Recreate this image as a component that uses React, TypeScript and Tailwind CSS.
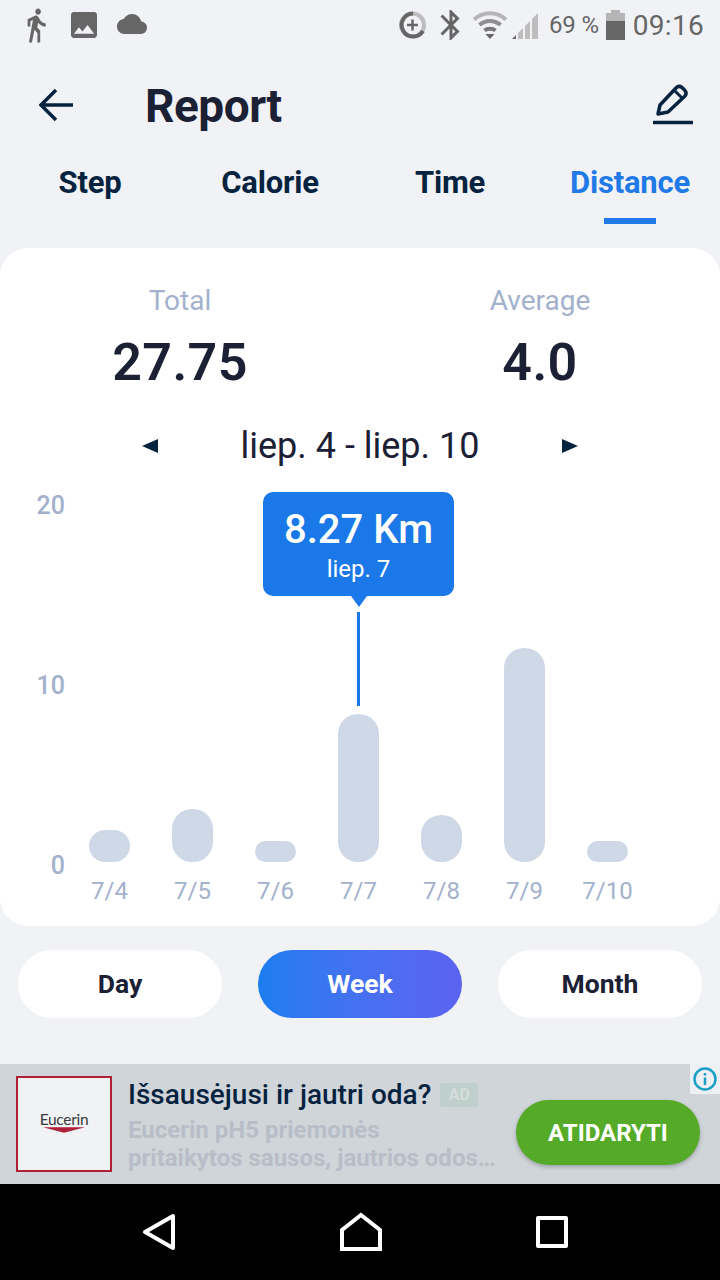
import React from 'react';

const font = { fontFamily: 'Roboto, sans-serif' };

const bars = [
  { label: '7/4', height: 32 },
  { label: '7/5', height: 53 },
  { label: '7/6', height: 21 },
  { label: '7/7', height: 148 },
  { label: '7/8', height: 47 },
  { label: '7/9', height: 214 },
  { label: '7/10', height: 21 },
];

const StatusBar = () => (
  <div className="h-[50px] flex items-center justify-between pl-[22px] pr-[16px] text-[#666666]">
    <div className="flex items-center">
      <svg width="28" height="38" viewBox="2 0 20 24" fill="#666666" preserveAspectRatio="none">
        <path d="M13.5 5.5c1.1 0 2-.9 2-2s-.9-2-2-2-2 .9-2 2 .9 2 2 2zM9.8 8.9L7 23h2.1l1.8-8 2.1 2v6h2v-7.5l-2.1-2 .6-3C14.8 12 16.8 13 19 13v-2c-1.9 0-3.5-1-4.3-2.4l-1-1.6c-.4-.6-1-1-1.7-1-.3 0-.5.1-.8.1L6 8.3V13h2V9.6l1.8-.7" />
      </svg>
      <svg className="ml-[21px]" width="26" height="26" viewBox="3 3 18 18" fill="#666666">
        <path d="M21 19V5c0-1.1-.9-2-2-2H5c-1.1 0-2 .9-2 2v14c0 1.100.9 2 2 2h14c1.100 0 2-.9 2-2zM8.500 13.500l2.500 3.010L14.500 12l4.500 6H5l3.500-4.500z" />
      </svg>
      <svg className="ml-[19px] -mt-[2px]" width="32" height="20" viewBox="0 4 24 16" fill="#666666">
        <path d="M19.350 10.040C18.670 6.590 15.640 4 12 4 9.110 4 6.600 5.640 5.350 8.040 2.340 8.360 0 10.910 0 14c0 3.310 2.690 6 6 6h13c2.760 0 5-2.240 5-5 0-2.640-2.050-4.780-4.650-4.960z" />
      </svg>
    </div>
    <div className="flex items-center">
      <svg width="30" height="30" viewBox="0 0 30 30" fill="none">
        <circle cx="14.500" cy="15" r="11.500" stroke="#bdbdbd" strokeWidth="4" />
        <path d="M15 3.500A11.500 11.500 0 1 0 25 21" stroke="#666666" strokeWidth="4" />
        <path d="M14.500 9.500v11M9 15h11" stroke="#666666" strokeWidth="2.500" />
      </svg>
      <svg className="ml-[11px]" width="24" height="30" viewBox="4 2 16 20" fill="#666666" preserveAspectRatio="none">
        <path d="M17.710 7.710L12 2h-1v7.590L6.410 5 5 6.410 10.590 12 5 17.590 6.410 19 11 14.410V22h1l5.710-5.710-4.300-4.290 4.300-4.290zM13 5.830l1.880 1.880L13 9.590V5.830zm1.880 10.460L13 18.170v-3.760l1.880 1.880z" />
      </svg>
      <svg className="ml-[9px]" width="36" height="30" viewBox="0 0 36 30" fill="none">
        <path d="M2 9.500C11 1 25 1 34 9.500" stroke="#b5b5b5" strokeWidth="4" />
        <path d="M7.500 15C13.500 9.500 22.500 9.500 28.500 15" stroke="#8f8f8f" strokeWidth="4" />
        <path d="M12.500 20.500C15.500 18 20.500 18 23.500 20.500" stroke="#777777" strokeWidth="4" />
        <path d="M13.500 24h9L18 29z" fill="#666666" />
      </svg>
      <svg className="ml-[2px]" width="30" height="30" viewBox="0 0 30 30">
        <path d="M2 29l4-4v4z" fill="#666666" />
        <path d="M8 29v-6l5-5v11zM15 29V16l5-5v18zM22 29V9l6-6v26z" fill="#bdbdbd" />
      </svg>
      <span className="ml-[9px] text-[24px] leading-none tracking-[-0.2px]">69 %</span>
      <svg className="ml-[7px]" width="19" height="30" viewBox="0 0 19 30">
        <path d="M5 0h9v3h5v8H0V3h5z" fill="#b5b5b5" />
        <rect x="0" y="11" width="19" height="19" fill="#666666" />
      </svg>
      <span className="ml-[8px] mt-[2px] text-[28px] leading-none tracking-[0.3px]">09:16</span>
    </div>
  </div>
);

const Header = () => (
  <div className="h-[110px] flex items-center justify-between pl-[39px] pr-[27px]">
    <div className="flex items-center">
      <svg width="34" height="34" viewBox="0 0 34 34" fill="none" stroke="#05233f" strokeWidth="3.500">
        <path d="M34 17H3M17 2L2 17l15 15" />
      </svg>
      <h1 className="ml-[72px] mt-[2px] text-[46px] font-bold leading-none text-[#1b2034] tracking-[-0.5px]">Report</h1>
    </div>
    <svg width="40" height="42" viewBox="0 0 40 42" fill="none" stroke="#05233f" strokeWidth="3.500">
      <path d="M5 30l2-9L23 4c2-2 4-2 6-.5l2.500 2.500c2 2 2 4 .5 6L15 28z" strokeLinejoin="round" />
      <path d="M22 7l8 8" strokeWidth="3" />
      <path d="M1 38.500h38" strokeLinecap="round" />
    </svg>
  </div>
);

const Tabs = () => (
  <div className="grid grid-cols-4 h-[64px]">
    {['Step', 'Calorie', 'Time', 'Distance'].map((t, i) => (
      <div key={t} className="relative flex justify-center pt-[5px]">
        <span className={`text-[31px] font-bold leading-[36px] tracking-[-0.2px] ${i === 3 ? 'text-[#1f7ae8]' : 'text-[#05233f]'}`}>{t}</span>
        {i === 3 && <div className="absolute bottom-0 w-[52px] h-[6px] bg-[#1f7ae8]" />}
      </div>
    ))}
  </div>
);

const Chart = () => (
  <div className="relative mt-[20px] flex">
    <div className="w-[68px] h-[390px] flex flex-col items-end justify-between pr-[3px] text-[25px] font-medium leading-[30px] text-[#a3b1cd]">
      <span>20</span>
      <span>10</span>
      <span>0</span>
    </div>
    <div className="grid grid-cols-7 w-[581px] h-[415px]">
      {bars.map(b => (
        <div key={b.label} className="flex flex-col items-center justify-end">
          <div className="w-[41px] bg-[#cfd8e6] rounded-[20px]" style={{ height: b.height }} />
          <span className="mt-[14px] text-[24px] leading-[30px] text-[#a3b1cd] whitespace-nowrap">{b.label}</span>
        </div>
      ))}
    </div>
    <div className="absolute top-[1px] left-[263px] w-[191px] flex flex-col items-center">
      <div className="w-[191px] h-[104px] bg-[#1a78e8] rounded-[10px] flex flex-col items-center text-white">
        <span className="mt-[15px] text-[40px] font-medium leading-[46px]">8.27 Km</span>
        <span className="mt-[1px] text-[24px] leading-[30px]">liep. 7</span>
      </div>
      <div className="w-0 h-0 border-l-[8px] border-r-[8px] border-t-[11px] border-l-transparent border-r-transparent border-t-[#1a78e8]" />
      <div className="mt-[5px] w-[3px] h-[94px] bg-[#1a78e8]" />
    </div>
  </div>
);

const Card = () => (
  <div className="h-[678px] bg-white rounded-[28px] pt-[35px]">
    <div className="grid grid-cols-2">
      {[['Total', '27.75'], ['Average', '4.0']].map(([label, value]) => (
        <div key={label} className="flex flex-col items-center">
          <span className="text-[28px] leading-[36px] text-[#a3b1cd]">{label}</span>
          <span className="mt-[12px] text-[52px] font-semibold leading-[64px] text-[#1b2034] tracking-[0.4px]">{value}</span>
        </div>
      ))}
    </div>
    <div className="mt-[26px] flex items-center justify-center gap-[72px] h-[50px]">
      <div className="w-0 h-0 border-y-[7px] border-r-[16px] border-y-transparent border-r-[#05233f]" />
      <span className="w-[260px] text-center text-[36px] leading-[44px] text-[#1b2034] whitespace-nowrap">liep. 4 - liep. 10</span>
      <div className="w-0 h-0 border-y-[7px] border-l-[16px] border-y-transparent border-l-[#05233f]" />
    </div>
    <Chart />
  </div>
);

const RangeButtons = () => (
  <div className="mt-[24px] px-[18px] flex justify-between">
    <button className="w-[204px] h-[68px] rounded-full bg-white text-[26.5px] font-bold text-[#1b2034]">Day</button>
    <button className="w-[204px] h-[68px] rounded-full bg-gradient-to-r from-[#1a7df0] to-[#5b63f0] text-[26.5px] font-bold text-white">Week</button>
    <button className="w-[204px] h-[68px] rounded-full bg-white text-[26.5px] font-bold text-[#1b2034]">Month</button>
  </div>
);

const Ad = () => (
  <div className="relative mt-[46px] h-[120px] bg-[#d0d5da] flex items-center pl-[16px]">
    <div className="w-[96px] h-[96px] border-2 border-[#ae2035] bg-[#f1f2f4] flex flex-col items-center pt-[32px]">
      <span className="text-[15.5px] leading-[18px] text-[#3a3a3c] tracking-[-0.3px]" style={{ fontFamily: 'Lato, sans-serif' }}>Eucerin</span>
      <svg width="42" height="6" viewBox="0 0 44 6" className="-mt-[1px]">
        <path d="M0 0h44L22 6z" fill="#ae2035" />
      </svg>
    </div>
    <div className="ml-[16px] w-[372px] flex flex-col">
      <div className="flex items-center">
        <span className="text-[28px] font-medium leading-[36px] text-[#05233f] whitespace-nowrap">Išsausėjusi ir jautri oda?</span>
        <span className="ml-[9px] w-[38px] h-[24px] rounded-[3px] bg-[#bfcfcb] text-[#d3dedb] text-[16px] font-bold leading-[24px] text-center">AD</span>
      </div>
      <span className="mt-[3px] text-[24px] font-bold leading-[28px] text-[#b8bdc7] whitespace-nowrap">Eucerin pH5 priemonės</span>
      <span className="text-[24px] font-bold leading-[28px] text-[#b8bdc7] whitespace-nowrap">pritaikytos sausos, jautrios odos…</span>
    </div>
    <button className="ml-[16px] w-[184px] h-[65px] mt-[16px] pt-[2px] rounded-full bg-[#55ab27] text-white text-[24px] font-bold shadow-[0_2px_4px_rgba(0,0,0,0.25)]">ATIDARYTI</button>
    <div className="absolute top-0 right-0 w-[30px] h-[30px] bg-[#eef0f3] flex items-center justify-center">
      <svg width="24" height="24" viewBox="0 0 24 24" fill="none" stroke="#1aa0c4" strokeWidth="2.500">
        <circle cx="12" cy="12" r="10.500" />
        <path d="M12 10.500V18" />
        <path d="M12 6v2.500" />
      </svg>
    </div>
  </div>
);

const NavBar = () => (
  <div className="h-[96px] bg-black flex items-center pl-[141px] text-white">
    <svg width="36" height="38" viewBox="0 0 36 38" fill="none" stroke="white" strokeWidth="4" strokeLinejoin="round">
      <path d="M32 3v32L4 19z" />
    </svg>
    <svg className="ml-[163px]" width="42" height="40" viewBox="0 0 42 40" fill="none" stroke="white" strokeWidth="4">
      <path d="M2 37V18L21 3l19 15v19z" />
    </svg>
    <svg className="ml-[154px]" width="32" height="32" viewBox="0 0 32 32" fill="none" stroke="white" strokeWidth="4" strokeLinejoin="round">
      <rect x="2" y="2" width="28" height="28" />
    </svg>
  </div>
);

export default function App() {
  return (
    <div className="w-[720px] h-[1280px] bg-[#f0f2f6] overflow-hidden flex flex-col" style={font}>
      <StatusBar />
      <Header />
      <Tabs />
      <div className="mt-[24px]">
        <Card />
      </div>
      <RangeButtons />
      <Ad />
      <NavBar />
    </div>
  );
}
